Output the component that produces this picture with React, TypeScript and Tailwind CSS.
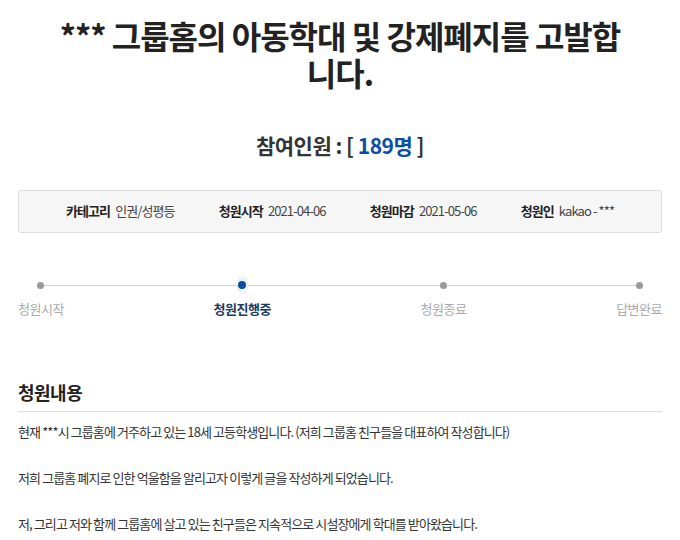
const info = [
  { label: '카테고리', value: '인권/성평등' },
  { label: '청원시작', value: '2021-04-06' },
  { label: '청원마감', value: '2021-05-06' },
  { label: '청원인', value: 'kakao - ***' },
];

const steps = [
  { name: '청원시작', active: false },
  { name: '청원진행중', active: true },
  { name: '청원종료', active: false },
  { name: '답변완료', active: false },
];

const paragraphs = [
  '현재 ***시 그룹홈에 거주하고 있는 18세 고등학생입니다. (저희 그룹홈 친구들을 대표하여 작성합니다)',
  '저희 그룹홈 폐지로 인한 억울함을 알리고자 이렇게 글을 작성하게 되었습니다.',
  '저, 그리고 저와 함께 그룹홈에 살고 있는 친구들은 지속적으로 시설장에게 학대를 받아왔습니다.',
];

export default function App() {
  return (
    <div className="min-h-screen bg-white px-[18px] text-[#333] [font-family:'Noto_Sans_CJK_KR','Noto_Sans',sans-serif]">
      {/* Title */}
      <h1 className="mx-auto max-w-[570px] pt-[17px] text-center text-[32px] font-bold leading-[37px] tracking-[-1px] text-[#222]">
        *** 그룹홈의 아동학대 및 강제폐지를 고발합니다.
      </h1>

      <p className="mt-[39px] text-center text-[21px] font-bold tracking-[-0.5px] text-[#333]">
        참여인원 : [ <span className="text-[#0b4ea2]">189명</span> ]
      </p>

      {/* Info box */}
      <div className="mt-[28px] flex h-[43px] items-center justify-center gap-[44px] rounded-[3px] border border-[#ddd] bg-[#f6f6f6] text-[13px] tracking-[-0.9px]">
        {info.map((item) => (
          <div key={item.label} className="flex items-center gap-[5px]">
            <span className="font-bold text-[#222]">{item.label}</span>
            <span className="text-[#444]">{item.value}</span>
          </div>
        ))}
      </div>

      {/* Progress */}
      <div className="relative mt-[47px]">
        <div className="absolute left-[20px] right-[22px] top-[5px] h-px bg-[#d5d5d5]" />
        <div className="flex justify-between">
          {steps.map((step) => (
            <div key={step.name} className="relative flex flex-col items-center">
              <div className="flex h-[11px] w-[11px] items-center justify-center">
                {step.active ? (
                  <span className="flex h-[18px] w-[18px] items-center justify-center rounded-full bg-[#eef4fb]">
                    <span className="h-[8px] w-[8px] rounded-full bg-[#0b4ea2]" />
                  </span>
                ) : (
                  <span className="h-[7px] w-[7px] rounded-full bg-[#999]" />
                )}
              </div>
              <span
                className={
                  step.active
                    ? 'mt-[8px] text-[13px] font-bold tracking-[-0.5px] text-[#1c3a63]'
                    : 'mt-[8px] text-[13px] tracking-[-0.5px] text-[#aaa]'
                }
              >
                {step.name}
              </span>
            </div>
          ))}
        </div>
      </div>

      {/* Content */}
      <h2 className="mt-[61px] text-[18px] font-bold tracking-[-0.5px] text-[#222]">청원내용</h2>
      <div className="mt-[5px] border-t border-[#ddd] pt-[8px] text-[13px] leading-[23px] tracking-[-0.9px] text-[#333]">
        {paragraphs.map((p, i) => (
          <p key={i} className={i > 0 ? 'mt-[23px]' : ''}>
            {p}
          </p>
        ))}
      </div>
    </div>
  );
}
